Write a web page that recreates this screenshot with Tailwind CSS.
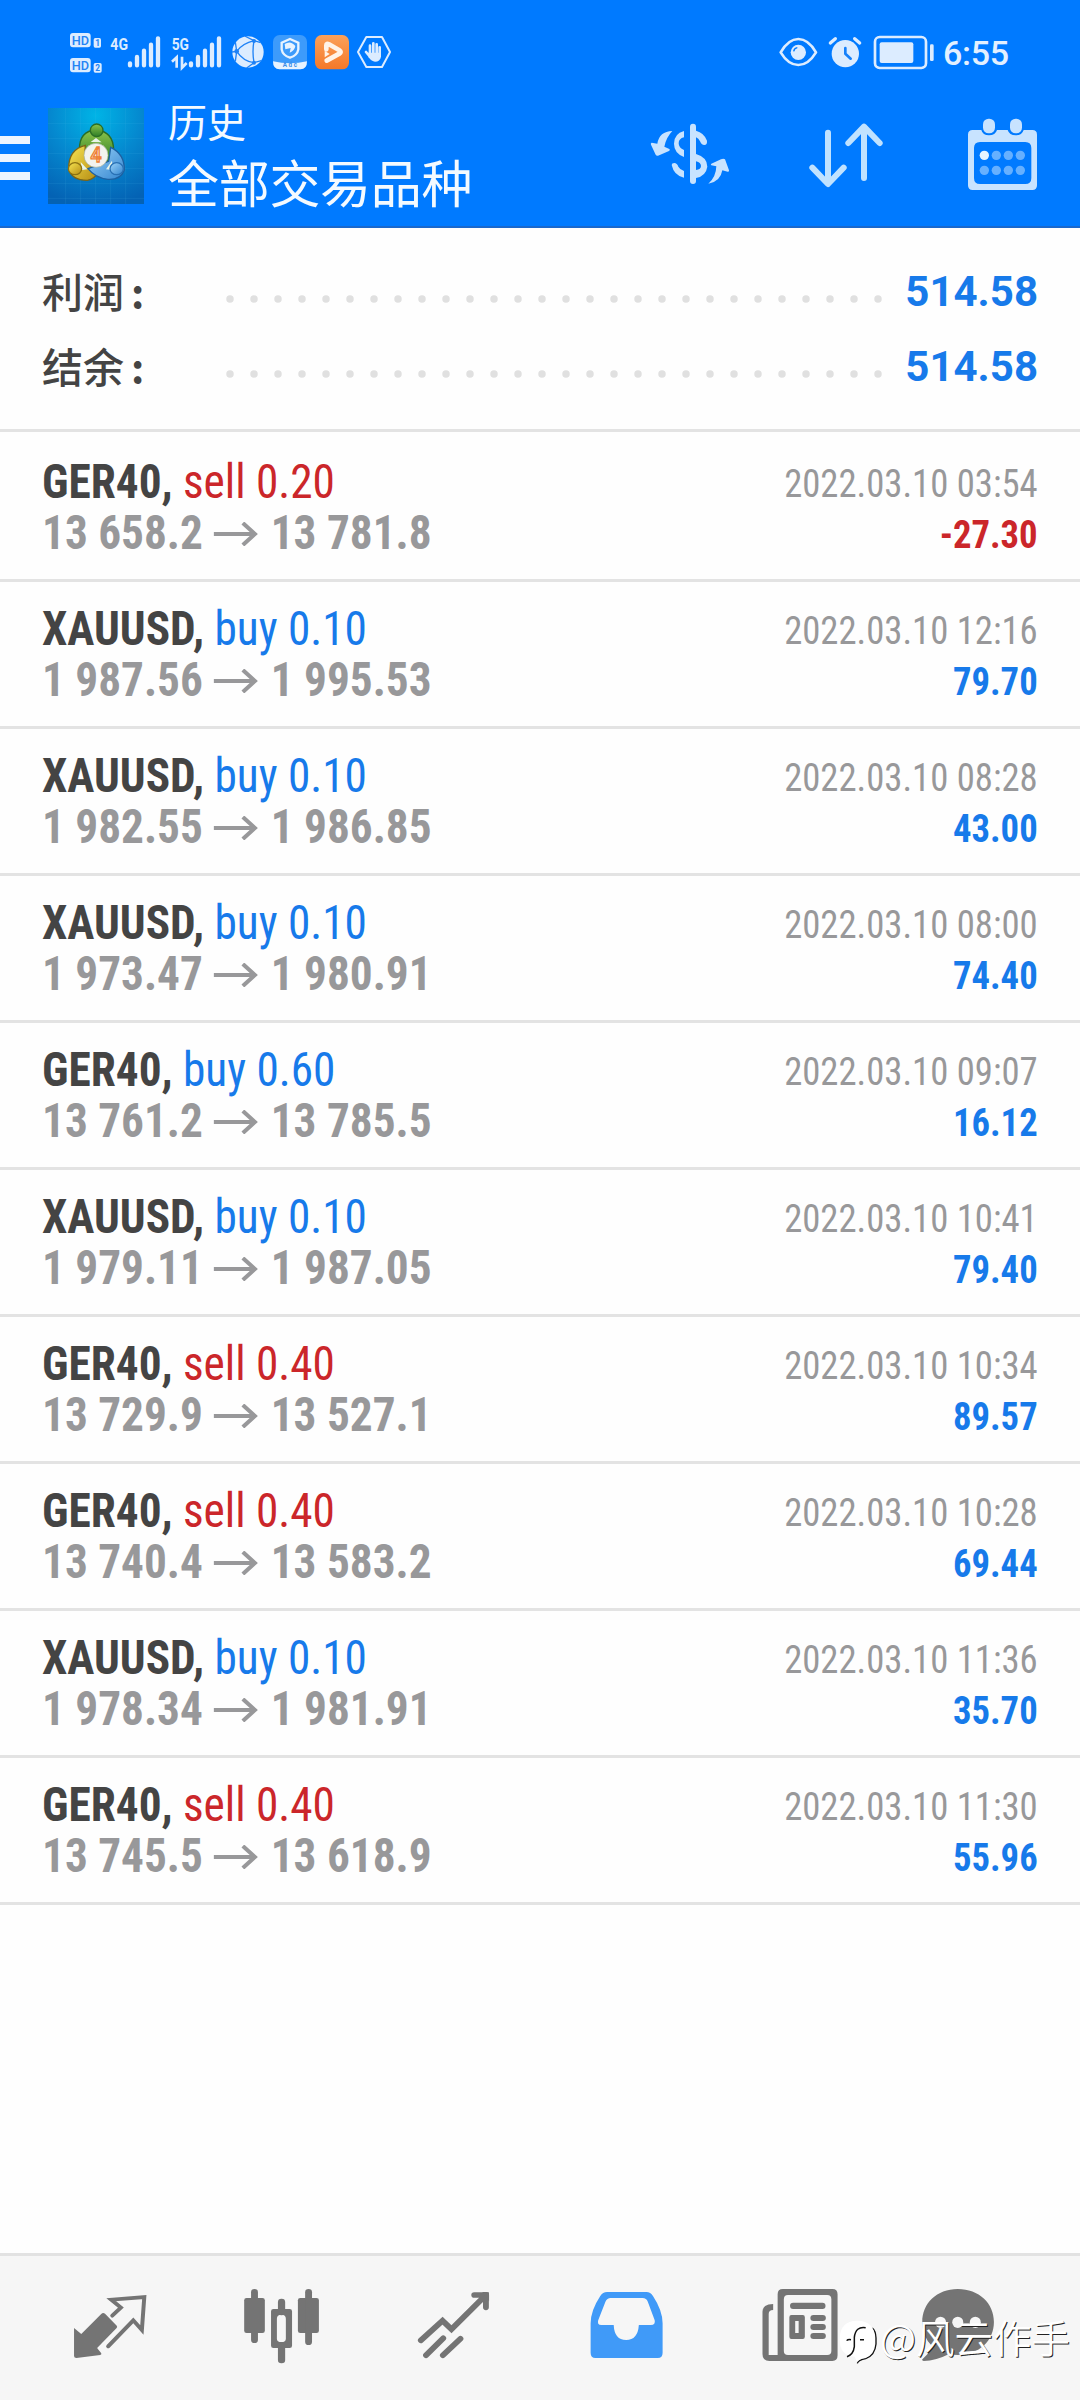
<!DOCTYPE html>
<html lang="zh">
<head>
<meta charset="utf-8">
<title>历史</title>
<script src="https://cdn.jsdelivr.net/npm/@tailwindcss/browser@4"></script>
</head>
<body class="bg-white">
<div class="w-[1080px] h-[2400px] flex flex-col bg-[#fefefe] overflow-hidden relative font-[Roboto,'Noto_Sans_CJK_SC',sans-serif]">
  <header class="h-[228px] shrink-0 bg-[#007aff] border-b-2 border-[#1a68cc]">
    <!-- status bar -->
    <div class="h-[90px] pt-5 flex justify-between">
      <div class="flex pl-[50px]">
        <svg class="w-[55px] h-[70px]" viewBox="0 0 165 210" fill="#dcecff" font-family="Roboto" font-weight="700">
          <rect x="60" y="39" width="62" height="43" rx="9"/><rect x="60" y="114" width="62" height="43" rx="9"/>
          <rect x="131" y="54" width="22" height="29" rx="5"/><rect x="131" y="129" width="24" height="29" rx="5"/>
          <g fill="#2383f5"><text x="65" y="74" font-size="38" font-weight="500" textLength="52" lengthAdjust="spacingAndGlyphs">HD</text><text x="65" y="149" font-size="38" font-weight="500" textLength="52" lengthAdjust="spacingAndGlyphs">HD</text>
          <text x="136" y="78" font-size="25">1</text><text x="136" y="153" font-size="25">2</text></g>
        </svg>
        <svg class="w-[60px] h-[70px]" viewBox="165 0 180 210" fill="#dcecff" stroke="#dcecff">
          <text x="181" y="89" font-size="50" font-weight="700" font-family="Roboto" stroke="none" textLength="53" lengthAdjust="spacingAndGlyphs">4G</text>
          <path d="M240 130v6M261 111v25M282 92v44M303 74v62M324 55v81" stroke-width="13" stroke-linecap="round"/>
        </svg>
        <svg class="w-[60px] h-[70px]" viewBox="345 0 180 210" fill="#dcecff" stroke="#dcecff">
          <text x="365" y="89" font-size="50" font-weight="700" font-family="Roboto" stroke="none" textLength="52" lengthAdjust="spacingAndGlyphs">5G</text>
          <path d="M423 130v6M444 111v25M465 92v44M486 74v62M507 55v81" stroke-width="13" stroke-linecap="round"/>
          <path d="M366 125l14-13v31M396 110v33l14-14" stroke-width="8" fill="none"/>
        </svg>
        <svg class="w-[45px] h-[70px]" viewBox="525 0 135 210" fill="none" stroke="#1f82f6" stroke-width="4">
          <circle cx="594" cy="96" r="47" fill="#dcecff" stroke="none"/>
          <path d="M560 94Q578 70 612 62M560 94Q580 124 612 128M612 62Q606 95 612 128M612 62L584 48M612 62L632 68M560 94L546 96M560 94L556 66M560 94L556 124M612 128L590 144M612 128L634 122"/>
          <g fill="#1f82f6" stroke="none"><circle cx="612" cy="63" r="6"/><circle cx="560" cy="94" r="7"/><circle cx="612" cy="128" r="6"/></g>
        </svg>
        <svg class="w-[42px] h-[70px]" viewBox="660 0 126 210">
          <rect x="669" y="45" width="102" height="103" rx="20" fill="#3d9bfb"/>
          <path d="M669 124Q720 136 771 124Q771 148 751 148H689Q669 148 669 124Z" fill="#e8f3ff"/>
          <path d="M720 57L745 68V88Q742 106 720 113Q698 106 695 88V68Z" fill="#3d9bfb" stroke="#e8f3ff" stroke-width="7"/>
          <path d="M704 72Q722 60 736 78Q734 92 719 98L722 84L706 88Z" fill="#e8f3ff"/>
          <text x="698" y="141" font-size="19" font-weight="700" font-family="Roboto" fill="#3d8fe8" textLength="43">Adc</text>
        </svg>
        <svg class="w-[42px] h-[70px]" viewBox="786 0 126 210">
          <defs><linearGradient id="og" x2="0" y2="1"><stop stop-color="#fba15a"/><stop offset="1" stop-color="#f47829"/></linearGradient></defs>
          <rect x="795" y="45" width="102" height="103" rx="20" fill="url(#og)"/>
          <path d="M829 88V76Q829 69 837 73L868 91Q876 96 868 101L830 122" fill="none" stroke="#fff3e8" stroke-width="14" stroke-linecap="round" stroke-linejoin="round"/>
          <path d="M824 92L839 102L824 112Z" fill="#fff3e8"/>
        </svg>
        <svg class="w-[48px] h-[70px]" viewBox="912 0 144 210" fill="none" stroke="#dcecff">
          <path d="M949 51H996L1020 96L996 141H949L924 96Z" stroke-width="6" stroke-linejoin="round"/>
          <path d="M960 77v26M970 70v32M980 73v30M989 82v24M948 96l12 14" stroke-width="8" stroke-linecap="round"/>
          <path d="M956 98H993V110Q990 125 975 125Q965 125 956 112Z" fill="#dcecff" stroke="none"/>
        </svg>
      </div>
      <div class="flex w-[320px]">
        <svg class="w-[180px] h-[70px]" viewBox="0 0 540 210" fill="none" stroke="#dcecff">
          <path d="M62 97Q85 57 115 57Q145 57 168 97Q145 135 115 135Q85 135 62 97Z" stroke-width="8" stroke-linejoin="round"/>
          <circle cx="115" cy="97" r="23" fill="#dcecff" stroke="none"/><path d="M101 94Q103 84 112 83" stroke="#007aff" stroke-width="4"/>
          <circle cx="256" cy="101" r="41" fill="#dcecff" stroke="none"/>
          <path d="M211 69L226 56M284 56L299 69" stroke-width="10" stroke-linecap="round"/>
          <path d="M256 84V101L272 116" stroke="#1680fa" stroke-width="8" stroke-linecap="round" stroke-linejoin="round"/>
          <rect x="345" y="51" width="153" height="93" rx="14" stroke-width="8"/>
          <rect x="359" y="67" width="101" height="62" rx="6" fill="#dcecff" stroke="none"/>
          <rect x="510" y="73" width="11" height="50" rx="4" fill="#dcecff" stroke="none"/>
        </svg>
        <div class="pl-[3px] pt-[13px] text-[34px] leading-[40px] tracking-[-0.3px] font-medium text-[#e3f0ff]">6:55</div>
      </div>
    </div>
    <!-- app bar -->
    <div class="h-[136px] flex">
      <div class="pt-[46px] w-[48px] flex flex-col gap-[10px]">
        <i class="block h-2 w-[30px] bg-[#ecf5ff]"></i><i class="block h-2 w-[30px] bg-[#ecf5ff]"></i><i class="block h-2 w-[30px] bg-[#ecf5ff]"></i>
      </div>
      <svg class="w-24 h-24 mt-[18px]" viewBox="144 54 288 288">
        <defs>
          <radialGradient id="bg" cx=".5" cy=".08" r=".95"><stop stop-color="#00b4e6"/><stop offset=".5" stop-color="#0588cf"/><stop offset="1" stop-color="#0462b4"/></radialGradient>
          <linearGradient id="gr" x2="0" y2="1"><stop stop-color="#8cc44a"/><stop offset="1" stop-color="#2d7d27"/></linearGradient>
          <linearGradient id="ye" x2="1" y2="1"><stop stop-color="#f8e654"/><stop offset="1" stop-color="#b58c12"/></linearGradient>
          <linearGradient id="bl" x2="1" y2="1"><stop stop-color="#9bd2f8"/><stop offset="1" stop-color="#3486d0"/></linearGradient>
        </defs>
        <rect x="144" y="54" width="288" height="288" fill="url(#bg)"/>
        <path d="M144 100H432M144 145H432M144 190H432M144 235H432M144 280H432M144 325H432M197 54V342M242 54V342M287 54V342M332 54V342M377 54V342" stroke="#5cc4ee" stroke-opacity=".18" stroke-width="2"/>
        <path d="M238 180Q238 122 288 120Q341 124 341 182Q341 205 326 218L252 200Z" fill="url(#gr)" stroke="#2b6d25" stroke-width="4"/>
        <path d="M256 166Q206 178 206 235Q214 271 262 271Q284 267 292 250L254 205Z" fill="url(#ye)" stroke="#7c6516" stroke-width="4"/>
        <path d="M332 172Q374 192 373 240Q362 270 324 268Q286 264 264 236L326 214Z" fill="url(#bl)" stroke="#1d60a0" stroke-width="4"/>
        <path d="M272 156L288 144L305 157M242 216L262 238L246 240M336 212L318 238L338 240" fill="#e8f4e8"/>
        <circle cx="290" cy="121" r="19" fill="url(#gr)" stroke="#2b6d25" stroke-width="4"/>
        <ellipse cx="225" cy="236" rx="20" ry="18" fill="url(#ye)" stroke="#8c7212" stroke-width="4"/>
        <ellipse cx="350" cy="236" rx="20" ry="18" fill="url(#bl)" stroke="#2870b4" stroke-width="4"/>
        <circle cx="288" cy="196" r="36" fill="#f2f3ee" stroke="#a9b49c" stroke-width="2"/>
        <text x="288" y="217" text-anchor="middle" font-size="58" font-weight="500" font-family="Roboto" fill="#fff3e6" stroke="#ee8136" stroke-width="4">4</text>
      </svg>
      <div class="pl-6 w-[476px] text-[#f4faff] whitespace-nowrap">
        <div class="mt-[13px] h-[42px] leading-[42px] text-[39px]">历史</div>
        <div class="mt-[11px] h-[60px] leading-[60px] text-[51px] tracking-[-0.3px]">全部交易品种</div>
      </div>
      <div class="flex h-[80px] mt-[20px]">
        <svg class="w-[120px] h-[80px]" viewBox="0 30 360 240" fill="#c8e3ff">
          <path d="M192 93Q162 101 162 131Q162 159 192 171V150Q176 144 176 130Q176 116 192 112ZM155 195Q155 189 163 189Q171 189 175 200Q180 209 192 213V233Q162 227 155 195Z"/>
          <path d="M228 92Q252 98 261 122Q262 135 253 135Q244 135 240 124Q236 115 228 112ZM228 162Q262 172 262 200Q258 228 228 234V210Q243 208 243 198Q243 188 228 184Z"/>
          <path d="M219 80V243" stroke="#c8e3ff" stroke-width="18" stroke-linecap="round"/>
          <path d="M157 93Q118 94 112 131L95 128Q91 129 93 134L107 164Q109 168 114 167L147 153Q152 150 148 147L133 140Q138 113 157 93ZM265 251Q288 232 289 199L274 196Q271 194 274 191L303 178Q310 175 315 178L327 211Q328 216 323 215L307 211Q301 246 265 251Z"/>
        </svg>
        <svg class="w-[170px] h-[80px]" viewBox="360 30 510 240" fill="none" stroke="#c0e2ff" stroke-width="18" stroke-linecap="round" stroke-linejoin="round">
          <path d="M624 98V250M577 203L624 252L671 203M732 234V82M685 129L732 80L779 129"/>
        </svg>
        <svg class="w-[170px] h-[80px]" viewBox="870 30 510 240" fill="#c8e3ff">
          <path fill-rule="evenodd" d="M1058 90H1084Q1088 106 1107 106Q1126 106 1131 90H1163Q1168 106 1187 106Q1206 106 1211 90H1237Q1251 90 1251 104V256Q1251 270 1237 270H1058Q1044 270 1044 256V104Q1044 90 1058 90ZM1080 126Q1062 126 1062 144V234Q1062 252 1080 252H1216Q1234 252 1234 234V144Q1234 126 1216 126Z"/>
          <rect x="1089" y="56" width="36" height="44" rx="17"/><rect x="1170" y="56" width="36" height="44" rx="17"/>
          <circle cx="1093" cy="166" r="14" fill="#e8f4ff"/>
          <g fill="#66b0ff"><circle cx="1129" cy="166" r="14"/><circle cx="1165" cy="166" r="14"/><circle cx="1201" cy="166" r="14"/><circle cx="1093" cy="211" r="14"/><circle cx="1129" cy="211" r="14"/><circle cx="1165" cy="211" r="14"/><circle cx="1201" cy="211" r="14"/></g>
        </svg>
      </div>
    </div>
  </header>

  <section class="h-[204px] shrink-0 border-b-3 border-[#e3e3e3] pt-[26px] px-[42px]">
    <div class="h-[75px] flex">
      <div class="w-[176px] text-[41px] leading-[72px] font-medium text-[#444] font-['Noto_Sans_CJK_SC',sans-serif]">利润<span class="ml-[7px] font-bold">:</span></div>
      <svg class="w-[672px] h-[75px] shrink-0" viewBox="0 0 672 75"><path d="M12 45H662" stroke="#e0e0e0" stroke-width="7.5" stroke-linecap="round" stroke-dasharray="0 24"/></svg>
      <div class="grow flex justify-end text-[42px] leading-[76px] font-bold text-[#177aea]">514.58</div>
    </div>
    <div class="h-[75px] flex">
      <div class="w-[176px] text-[41px] leading-[72px] font-medium text-[#444] font-['Noto_Sans_CJK_SC',sans-serif]">结余<span class="ml-[7px] font-bold">:</span></div>
      <svg class="w-[672px] h-[75px] shrink-0" viewBox="0 0 672 75"><path d="M12 45H662" stroke="#e0e0e0" stroke-width="7.5" stroke-linecap="round" stroke-dasharray="0 24"/></svg>
      <div class="grow flex justify-end text-[42px] leading-[76px] font-bold text-[#177aea]">514.58</div>
    </div>
  </section>

  <main id="deals" class="grow pt-[3px]"></main>

  <nav class="h-[147px] shrink-0 border-t-3 border-[#e2e2e2] bg-[#f6f6f6] flex">
    <svg class="w-[186px] h-[144px]" viewBox="0 48 540.1 432" preserveAspectRatio="none" fill="#747474">
      <path d="M215 264L236 282L294 222Q299 216 305 221L339 257Q342 261 338 265L282 324L294 340Q296 344 291 345L222 354Q215 354 215 348Z"/>
      <path d="M326 227L351 203L323 179L419 171L412 270L387 241L314 319" fill="none" stroke="#747474" stroke-width="11.5" stroke-linejoin="miter" stroke-linecap="round"/>
    </svg>
    <svg class="w-[176px] h-[144px]" viewBox="540.1 48 511 432" preserveAspectRatio="none" fill="#747474">
      <rect x="709" y="174" width="60" height="105" rx="7"/><rect x="729" y="147" width="20" height="162" rx="10"/>
      <rect x="865" y="174" width="61" height="105" rx="7"/><rect x="886" y="147" width="20" height="168" rx="10"/>
      <rect x="807" y="176" width="21" height="50" rx="10"/><rect x="807" y="310" width="21" height="60" rx="10"/>
      <path fill-rule="evenodd" d="M794 207H841Q848 207 848 214V317Q848 324 841 324H794Q787 324 787 317V214Q787 207 794 207ZM817 224Q804 224 804 236V296Q804 306 817 306Q830 306 830 296V236Q830 224 817 224Z"/>
    </svg>
    <svg class="w-[178px] h-[144px]" viewBox="1051.1 48 516.9 432" preserveAspectRatio="none" fill="none" stroke="#747474" stroke-width="17" stroke-linecap="round">
      <path d="M1222 301L1285 242L1311 268L1408 168M1237 346L1287 295M1286 346L1337 296M1377 165H1411V202" />
      <path d="M1400 156H1412Q1420 156 1420 164V184Z" fill="#747474" stroke="none"/>
    </svg>
    <svg class="w-[170px] h-[144px]" viewBox="0 48 493.6 432" preserveAspectRatio="none" fill="#409af8">
      <path fill-rule="evenodd" d="M195 156H309Q321 156 328 168Q356 212 356 250V338Q356 354 342 354H161Q147 354 147 338V250Q147 212 175 168Q182 156 195 156ZM205 174Q195 174 190 185L169 241Q165 255 178 255H214Q216 300 250 300Q284 300 287 255H322Q336 255 333 241L313 185Q309 174 298 174Z"/>
    </svg>
    <svg class="w-[165px] h-[144px]" viewBox="493.6 48 479.1 432" preserveAspectRatio="none" fill="#747474">
      <path fill-rule="evenodd" d="M705 147H849Q864 147 864 163V346Q864 363 849 363H666Q646 363 646 342V215Q646 192 677 192V210Q664 210 664 222V345H690V163Q690 147 705 147ZM720 165Q708 165 708 178V333Q708 345 720 345H834Q846 345 846 333V178Q846 165 834 165Z"/>
      <rect x="726" y="188" width="103" height="19" rx="9"/><rect x="785" y="225" width="45" height="18" rx="9"/><rect x="785" y="252" width="45" height="18" rx="9"/><rect x="785" y="279" width="45" height="18" rx="9"/>
      <path fill-rule="evenodd" d="M730 225H763Q769 225 769 232V290Q769 297 763 297H730Q724 297 724 290V232Q724 225 730 225ZM741 243V279H751V243Z"/>
    </svg>
    <svg class="w-[205px] h-[144px]" viewBox="972.7 48 595.3 432" preserveAspectRatio="none" fill="#747474">
      <path d="M1213 147C1275 147 1318 190 1318 246C1318 302 1275 345 1213 345Q1200 345 1188 342Q1150 362 1114 363Q1107 361 1111 357Q1135 335 1138 318Q1110 290 1110 246C1110 190 1152 147 1213 147Z"/>
      <g fill="#f6f6f6"><ellipse cx="1163" cy="247" rx="16" ry="17"/><ellipse cx="1213" cy="247" rx="16" ry="17"/><ellipse cx="1264" cy="247" rx="16" ry="17"/></g>
    </svg>
  </nav>

  <!-- author mark over the tab bar -->
  <div class="absolute left-[838px] top-[2312px] flex">
    <svg class="w-[42px] h-[54px]" viewBox="55 36 126 162">
      <path d="M113 190Q116 180 138 176Q166 166 169 132V114Q168 92 158 84" fill="none" stroke="#111" stroke-width="4"/>
      <path d="M113 62Q166 62 166 118Q166 164 136 174Q120 176 112 185L105 170Q60 168 60 118Q60 62 113 62Z" fill="#fff"/>
      <path d="M138 83Q108 78 104 112V140Q101 164 82 170M81 122Q84 118 94 119M121 119H133" fill="none" stroke="#111" stroke-width="4.5"/>
    </svg>
    <div class="text-[38.5px] leading-[48px] font-[350] text-white whitespace-nowrap [text-shadow:1px_1px_0_#222] font-['Noto_Sans_CJK_SC',sans-serif]">@风云作手</div>
  </div>
</div>

<template id="deal">
  <div class="h-[147px] border-b-3 border-[#e3e3e3] px-[42px] pt-[21px] flex justify-between whitespace-nowrap [font-stretch:75%]">
    <div class="text-[48px] leading-[51px] origin-left scale-x-[.943]">
      <div><b class="font-bold text-[#444]" data-f="sym"></b> <span data-f="side"></span></div>
      <div class="flex items-center font-bold text-[#98989a]">
        <span data-f="open"></span>
        <svg class="w-[47px] h-[24px] ml-[11px] mr-[14px] mt-[2px]" viewBox="0 0 44 24" preserveAspectRatio="none" fill="none" stroke="#98989a" stroke-width="4"><path d="M0 12H41M29 1L41 12L29 23"/></svg>
        <span data-f="close"></span>
      </div>
    </div>
    <div class="text-right text-[39px] leading-[51px] pt-[3px] origin-right scale-x-[.94]">
      <div class="text-[#98989a]" data-f="time"></div>
      <div class="font-bold" data-f="profit"></div>
    </div>
  </div>
</template>
<script>
const deals = [
  ['GER40,','sell 0.20','13 658.2','13 781.8','2022.03.10 03:54','-27.30'],
  ['XAUUSD,','buy 0.10','1 987.56','1 995.53','2022.03.10 12:16','79.70'],
  ['XAUUSD,','buy 0.10','1 982.55','1 986.85','2022.03.10 08:28','43.00'],
  ['XAUUSD,','buy 0.10','1 973.47','1 980.91','2022.03.10 08:00','74.40'],
  ['GER40,','buy 0.60','13 761.2','13 785.5','2022.03.10 09:07','16.12'],
  ['XAUUSD,','buy 0.10','1 979.11','1 987.05','2022.03.10 10:41','79.40'],
  ['GER40,','sell 0.40','13 729.9','13 527.1','2022.03.10 10:34','89.57'],
  ['GER40,','sell 0.40','13 740.4','13 583.2','2022.03.10 10:28','69.44'],
  ['XAUUSD,','buy 0.10','1 978.34','1 981.91','2022.03.10 11:36','35.70'],
  ['GER40,','sell 0.40','13 745.5','13 618.9','2022.03.10 11:30','55.96'],
];
const tpl = document.getElementById('deal');
const list = document.getElementById('deals');
const blue = 'text-[#177aea]', red = 'text-[#cb262a]';
for (const d of deals) {
  const n = tpl.content.cloneNode(true);
  ['sym','side','open','close','time','profit'].forEach((k, i) => n.querySelector(`[data-f=${k}]`).textContent = d[i]);
  n.querySelector('[data-f=side]').classList.add(d[1].startsWith('buy') ? blue : red);
  n.querySelector('[data-f=profit]').classList.add(d[5].startsWith('-') ? red : blue);
  list.append(n);
}
</script>
</body>
</html>
